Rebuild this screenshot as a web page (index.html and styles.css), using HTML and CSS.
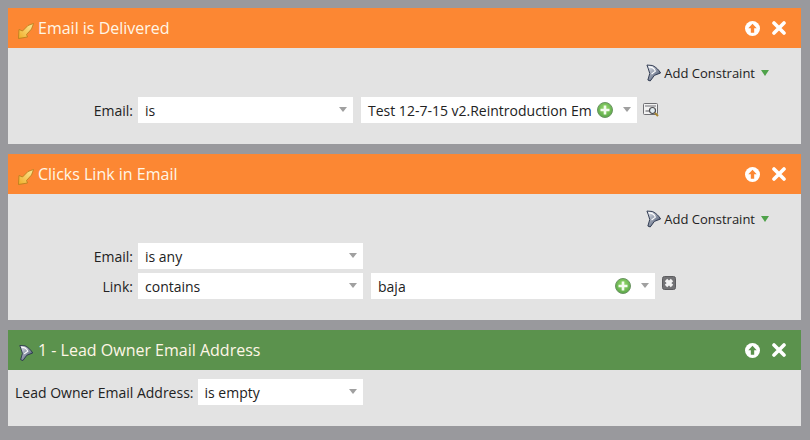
FILE: index.html
```html
<!DOCTYPE html>
<html>
  <head>
    <title>Smart List Filters</title>
    <meta name="viewport" content="width=device-width">
    <link rel="stylesheet" href="styles.css">
  </head>
  <body>
    <svg class="defs" width="0" height="0">
      <defs>
        <linearGradient id="leafGrad" x1="0" y1="1" x2="1" y2="0">
          <stop offset="0" stop-color="#f0ad26"/>
          <stop offset="1" stop-color="#fdeb9c"/>
        </linearGradient>
        <linearGradient id="funnelGrad" x1="0" y1="0" x2="1" y2="1">
          <stop offset="0" stop-color="#f0f3f8"/>
          <stop offset="1" stop-color="#2f3d5a"/>
        </linearGradient>
        <radialGradient id="plusGrad" cx=".5" cy=".4" r=".6">
          <stop offset="0" stop-color="#9ade6e"/>
          <stop offset="1" stop-color="#5aa648"/>
        </radialGradient>
        <symbol id="leaf" viewBox="0 0 16 16">
          <path d="M.5 15.500 L1 6.500 L4.500 8 L10 2.500 L15.500 .5 L13.500 6 L8.500 11.500 L9.500 14 Z" fill="url(#leafGrad)" stroke="#b27d1a" stroke-width=".8"/>
        </symbol>
        <symbol id="funnel" viewBox="0 0 16 18">
          <path d="M1 .5 L7 1 C11 3 14 6 15.500 9 L9 11.500 L4.500 17.500 L2 16.500 L4 9.500 C3 6 2 3 1 .5 Z" fill="url(#funnelGrad)" stroke="#27324a" stroke-width="1"/>
          <path d="M3 2.500 C6 2.500 9 4.500 10 7 L6 10" fill="none" stroke="#fff" stroke-width="1.200"/>
        </symbol>
        <symbol id="plus" viewBox="0 0 16 16">
          <circle cx="8" cy="8" r="7.500" fill="url(#plusGrad)" stroke="#6c9464"/>
          <path d="M8 3.500 V12.500 M3.500 8 H12.500" stroke="#f4fbef" stroke-width="2.600"/>
        </symbol>
        <symbol id="up" viewBox="0 0 16 16">
          <circle cx="8" cy="8" r="8" fill="#fff"/>
          <path d="M8 2.800 L12.500 7.800 H9.800 V12.500 H6.200 V7.800 H3.500 Z" fill="var(--head)"/>
        </symbol>
        <symbol id="close" viewBox="0 0 14 14">
          <path d="M2 2 L12 12 M12 2 L2 12" stroke="#fff" stroke-width="3.600" stroke-linecap="round"/>
        </symbol>
      </defs>
    </svg>

    <section class="panel">
      <header class="head orange">
        <svg class="head-icon"><use href="#leaf"/></svg>
        <span class="title">Email is Delivered</span>
        <svg class="up"><use href="#up"/></svg>
        <svg class="close"><use href="#close"/></svg>
      </header>
      <div class="body">
        <div class="constraint">
          <svg class="funnel"><use href="#funnel"/></svg>
          <span>Add Constraint</span>
          <i class="tri"></i>
        </div>
        <div class="row">
          <label class="lbl">Email:</label>
          <div class="sel w215"><span>is</span><i class="arrow"></i></div>
          <div class="sel w276 gap8">
            <span>Test 12-7-15 v2.Reintroduction Em</span>
            <svg class="plus"><use href="#plus"/></svg>
            <i class="arrow"></i>
          </div>
          <svg class="preview" width="16" height="14" viewBox="0 0 16 14">
            <rect x="0.500" y="0.500" width="14" height="11" rx="1" fill="#f2f2f2" stroke="#6f6f73"/>
            <rect x="2" y="2" width="11" height="2" fill="#b0b0b3"/>
            <path d="M2.500 8 H6" stroke="#55555a"/>
            <circle cx="9.500" cy="7.500" r="3" fill="#e4eef2" stroke="#4c4c50" stroke-width="1.200"/>
            <path d="M12 10 L15 13" stroke="#a58330" stroke-width="2"/>
          </svg>
        </div>
      </div>
    </section>

    <section class="panel">
      <header class="head orange">
        <svg class="head-icon"><use href="#leaf"/></svg>
        <span class="title">Clicks Link in Email</span>
        <svg class="up"><use href="#up"/></svg>
        <svg class="close"><use href="#close"/></svg>
      </header>
      <div class="body">
        <div class="constraint">
          <svg class="funnel"><use href="#funnel"/></svg>
          <span>Add Constraint</span>
          <i class="tri"></i>
        </div>
        <div class="row">
          <label class="lbl">Email:</label>
          <div class="sel w225"><span>is any</span><i class="arrow"></i></div>
        </div>
        <div class="row tight">
          <label class="lbl">Link:</label>
          <div class="sel w225"><span>contains</span><i class="arrow"></i></div>
          <div class="sel w284 gap8">
            <span>baja</span>
            <svg class="plus"><use href="#plus"/></svg>
            <i class="arrow"></i>
          </div>
          <svg class="remove" width="14" height="14" viewBox="0 0 14 14">
            <rect x="0.500" y="0.500" width="13" height="13" rx="2" fill="#737376" stroke="#5c5c5f"/>
            <path d="M4 4 L10 10 M10 4 L4 10" stroke="#f3f3f3" stroke-width="3.400"/>
          </svg>
        </div>
      </div>
    </section>

    <section class="panel">
      <header class="head green">
        <svg class="head-icon"><use href="#funnel"/></svg>
        <span class="title">1 - Lead Owner Email Address</span>
        <svg class="up"><use href="#up"/></svg>
        <svg class="close"><use href="#close"/></svg>
      </header>
      <div class="body attr">
        <div class="row">
          <label class="lbl auto">Lead Owner Email Address:</label>
          <div class="sel w165"><span>is empty</span><i class="arrow"></i></div>
        </div>
      </div>
    </section>
  </body>
</html>
```

FILE: styles.css
```css
* { margin: 0; padding: 0; box-sizing: border-box; }
body {
  display: flex;
  flex-direction: column;
  gap: 10px;
  padding: 8px 9px 0 8px;
  height: 100vh;
  overflow: hidden;
  background-color: #99999d;
  font-family: "Open Sans", sans-serif;
  font-size: 14px;
  color: #222;
}

.defs {
  position: absolute;
}

.panel {
  background-color: #e3e3e3;
}

.head {
  display: flex;
  align-items: center;
  height: 40px;
  padding: 0 15px 0 10px;
  color: #fff6e6;
}
.orange {
  --head: #fc8733;
  background-color: #fc8733;
}
.green {
  --head: #5b924d;
  background-color: #5b924d;
}

.head-icon {
  width: 16px;
  height: 16px;
  margin-top: 5px;
  margin-right: 4px;
}
.title {
  flex: 1;
  font-size: 16px;
}
.up {
  width: 15px;
  height: 15px;
  margin-right: 12px;
}
.close {
  width: 14px;
  height: 14px;
}

.body {
  height: 96px;
  padding-top: 16px;
}
.panel:nth-of-type(2) .body {
  height: 126px;
}
.body.attr {
  height: 56px;
  padding-top: 9px;
}

.constraint {
  display: flex;
  align-items: center;
  justify-content: flex-end;
  height: 18px;
  padding-right: 32px;
  font-size: 13px;
  margin-bottom: 15px;
}
.funnel {
  width: 15px;
  height: 18px;
  margin-right: 3px;
}
.tri {
  width: 0;
  height: 0;
  margin-left: 6px;
  border-left: 4px solid transparent;
  border-right: 4px solid transparent;
  border-top: 6px solid #4fa24a;
}

.row {
  display: flex;
  align-items: center;
  height: 26px;
}
.row.tight {
  margin-top: 4px;
}
.lbl {
  width: 125px;
  margin-right: 5px;
  text-align: right;
}
.lbl.auto {
  width: auto;
  margin-left: 7px;
  margin-right: 4px;
}

.sel {
  display: flex;
  align-items: center;
  height: 26px;
  padding: 0 6px 0 7px;
  background-color: #fff;
}
.sel > span {
  flex: 1;
  white-space: nowrap;
}
.w165 { width: 165px; }
.w215 { width: 215px; }
.w225 { width: 225px; }
.w276 { width: 276px; }
.w284 { width: 284px; }
.gap8 { margin-left: 8px; }

.arrow {
  width: 0;
  height: 0;
  margin-bottom: 2px;
  border-left: 4px solid transparent;
  border-right: 4px solid transparent;
  border-top: 5px solid #a0a0a0;
}
.plus {
  width: 16px;
  height: 16px;
  margin: 0 10px 0 0;
}
.preview {
  margin-left: 6px;
}
.remove {
  margin-left: 7px;
  margin-bottom: 6px;
}
```
